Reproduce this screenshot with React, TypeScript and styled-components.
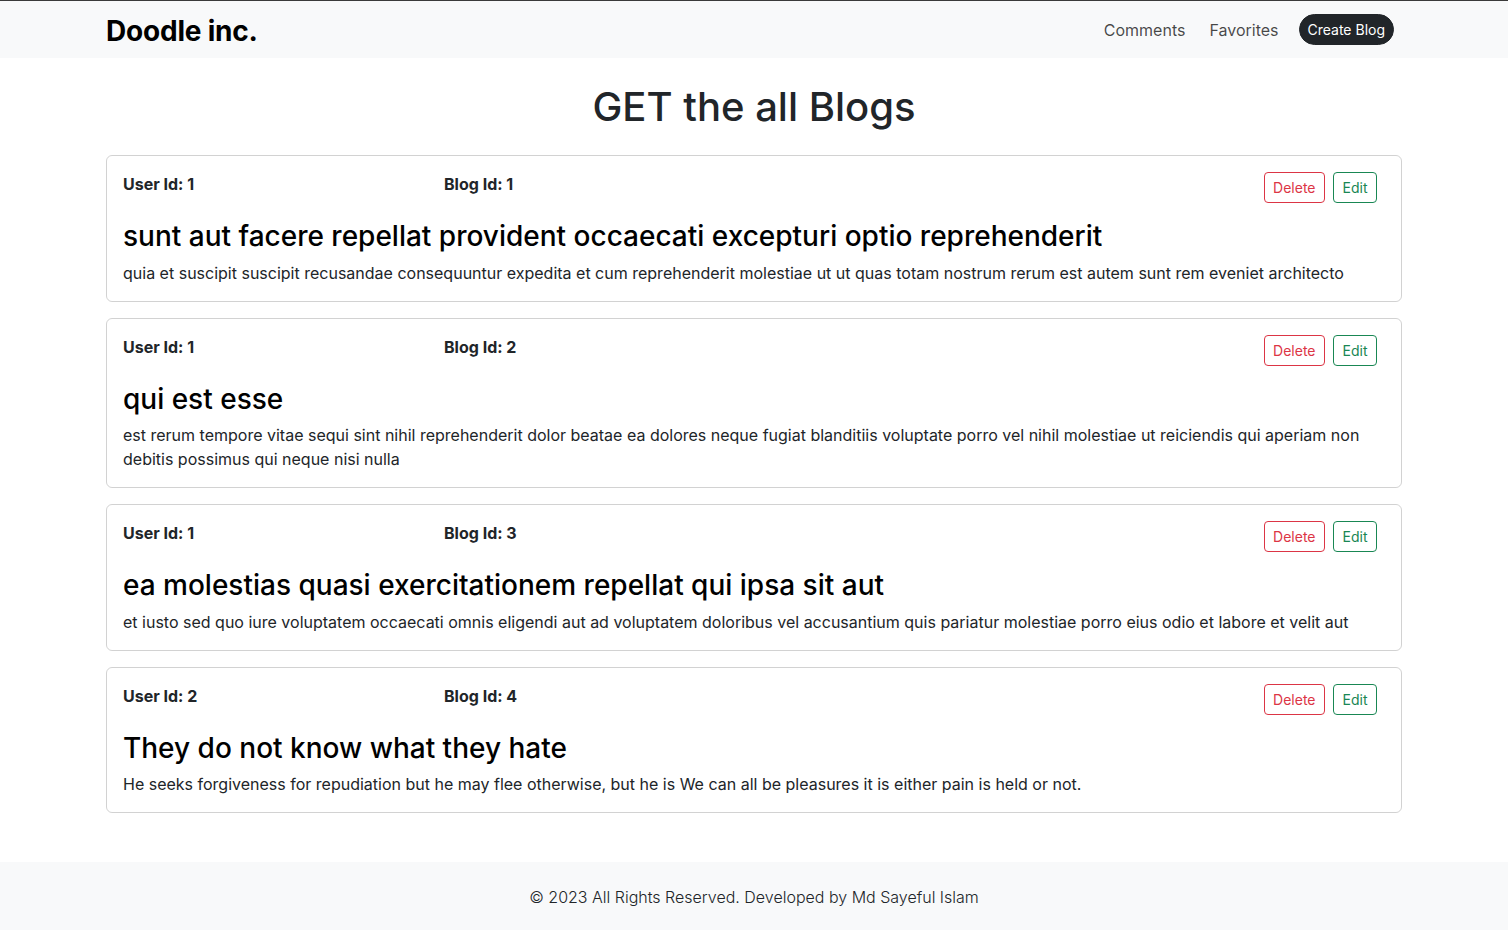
import React from "react";
import styled, { createGlobalStyle } from "styled-components";

const Global = createGlobalStyle`
  * { box-sizing: border-box; }
  html, body { margin: 0; padding: 0; background: #fff; }
  body {
    font-family: Inter, "Noto Sans", "Liberation Sans", sans-serif;
    color: #212529;
    font-size: 16px;
    line-height: 1.5;
  }
`;

const Page = styled.div`
  min-height: 930px;
  display: flex;
  flex-direction: column;
`;

const Navbar = styled.nav`
  background: #f8f9fa;
  border-top: 1px solid #3a3a3a;
  height: 58px;
  display: flex;
  align-items: center;
`;

const Container = styled.div`
  width: 1320px;
  margin: 0 auto;
  padding: 0 12px;
`;

const NavInner = styled(Container)`
  display: flex;
  align-items: center;
  justify-content: space-between;
`;

const Brand = styled.a`
  font-size: 28px;
  font-weight: 700;
  color: #000;
  text-decoration: none;
  letter-spacing: -0.2px;
  line-height: 1;
  margin-top: 2px;
`;

const NavLinks = styled.div`
  display: flex;
  align-items: center;
  margin-right: 8px;
`;

const NavLink = styled.a`
  font-size: 16px;
  color: rgba(0, 0, 0, 0.72);
  text-decoration: none;
  padding: 0 12px;
`;

const PillButton = styled.button`
  font-family: inherit;
  font-size: 14px;
  line-height: 1.5;
  color: #fff;
  background: #212529;
  border: 1px solid #212529;
  border-radius: 16px;
  padding: 4px 8px;
  margin-left: 8px;
  cursor: pointer;
`;

const Main = styled(Container)`
  flex: 1;
  padding-bottom: 33px;
`;

const Title = styled.h1`
  font-size: 40px;
  font-weight: 500;
  line-height: 1.2;
  text-align: center;
  margin: 25px 0 24px;
  color: #212529;
`;

const Card = styled.div`
  border: 1px solid rgba(0, 0, 0, 0.175);
  border-radius: 6px;
  padding: 16px;
  margin-bottom: 16px;
`;

const CardHead = styled.div`
  display: flex;
  align-items: flex-start;
`;

const Meta = styled.div<{ $w?: number }>`
  font-weight: 700;
  font-size: 16px;
  width: ${(p) => (p.$w ? `${p.$w}px` : "auto")};
  line-height: 24px;
  color: #212529;
`;

const Actions = styled.div`
  margin-left: auto;
  margin-right: 8px;
  display: flex;
  gap: 8px;
`;

const OutlineButton = styled.button<{ $color: string }>`
  font-family: inherit;
  font-size: 14px;
  line-height: 1.5;
  padding: 4px 8.5px;
  border-radius: 4px;
  background: transparent;
  color: ${(p) => p.$color};
  border: 1px solid ${(p) => p.$color};
  cursor: pointer;
`;

const PostTitle = styled.h3`
  font-size: 28px;
  font-weight: 500;
  line-height: 1.2;
  margin: 17px 0 7px;
  color: #000;
`;

const PostBody = styled.p`
  margin: 0;
  font-size: 16px;
  line-height: 24px;
  color: #212529;
`;

const Footer = styled.footer`
  background: #f8f9fa;
  height: 69px;
  display: flex;
  align-items: center;
  justify-content: center;
  font-size: 16px;
  font-weight: 300;
  color: #212529;
`;

const posts = [
  {
    userId: 1,
    id: 1,
    title: "sunt aut facere repellat provident occaecati excepturi optio reprehenderit",
    body: "quia et suscipit suscipit recusandae consequuntur expedita et cum reprehenderit molestiae ut ut quas totam nostrum rerum est autem sunt rem eveniet architecto",
  },
  {
    userId: 1,
    id: 2,
    title: "qui est esse",
    body: "est rerum tempore vitae sequi sint nihil reprehenderit dolor beatae ea dolores neque fugiat blanditiis voluptate porro vel nihil molestiae ut reiciendis qui aperiam non debitis possimus qui neque nisi nulla",
  },
  {
    userId: 1,
    id: 3,
    title: "ea molestias quasi exercitationem repellat qui ipsa sit aut",
    body: "et iusto sed quo iure voluptatem occaecati omnis eligendi aut ad voluptatem doloribus vel accusantium quis pariatur molestiae porro eius odio et labore et velit aut",
  },
  {
    userId: 2,
    id: 4,
    title: "They do not know what they hate",
    body: "He seeks forgiveness for repudiation but he may flee otherwise, but he is We can all be pleasures it is either pain is held or not.",
  },
];

export default function App() {
  return (
    <>
      <Global />
      <Page>
        <Navbar>
          <NavInner>
            <Brand href="#">Doodle inc.</Brand>
            <NavLinks>
              <NavLink href="#">Comments</NavLink>
              <NavLink href="#">Favorites</NavLink>
              <PillButton>Create Blog</PillButton>
            </NavLinks>
          </NavInner>
        </Navbar>
        <Main>
          <Title>GET the all Blogs</Title>
          {posts.map((p) => (
            <Card key={p.id}>
              <CardHead>
                <Meta $w={321}>User Id: {p.userId}</Meta>
                <Meta>Blog Id: {p.id}</Meta>
                <Actions>
                  <OutlineButton $color="#dc3545">Delete</OutlineButton>
                  <OutlineButton $color="#198754">Edit</OutlineButton>
                </Actions>
              </CardHead>
              <PostTitle>{p.title}</PostTitle>
              <PostBody>{p.body}</PostBody>
            </Card>
          ))}
        </Main>
        <Footer>© 2023 All Rights Reserved. Developed by Md Sayeful Islam</Footer>
      </Page>
    </>
  );
}
